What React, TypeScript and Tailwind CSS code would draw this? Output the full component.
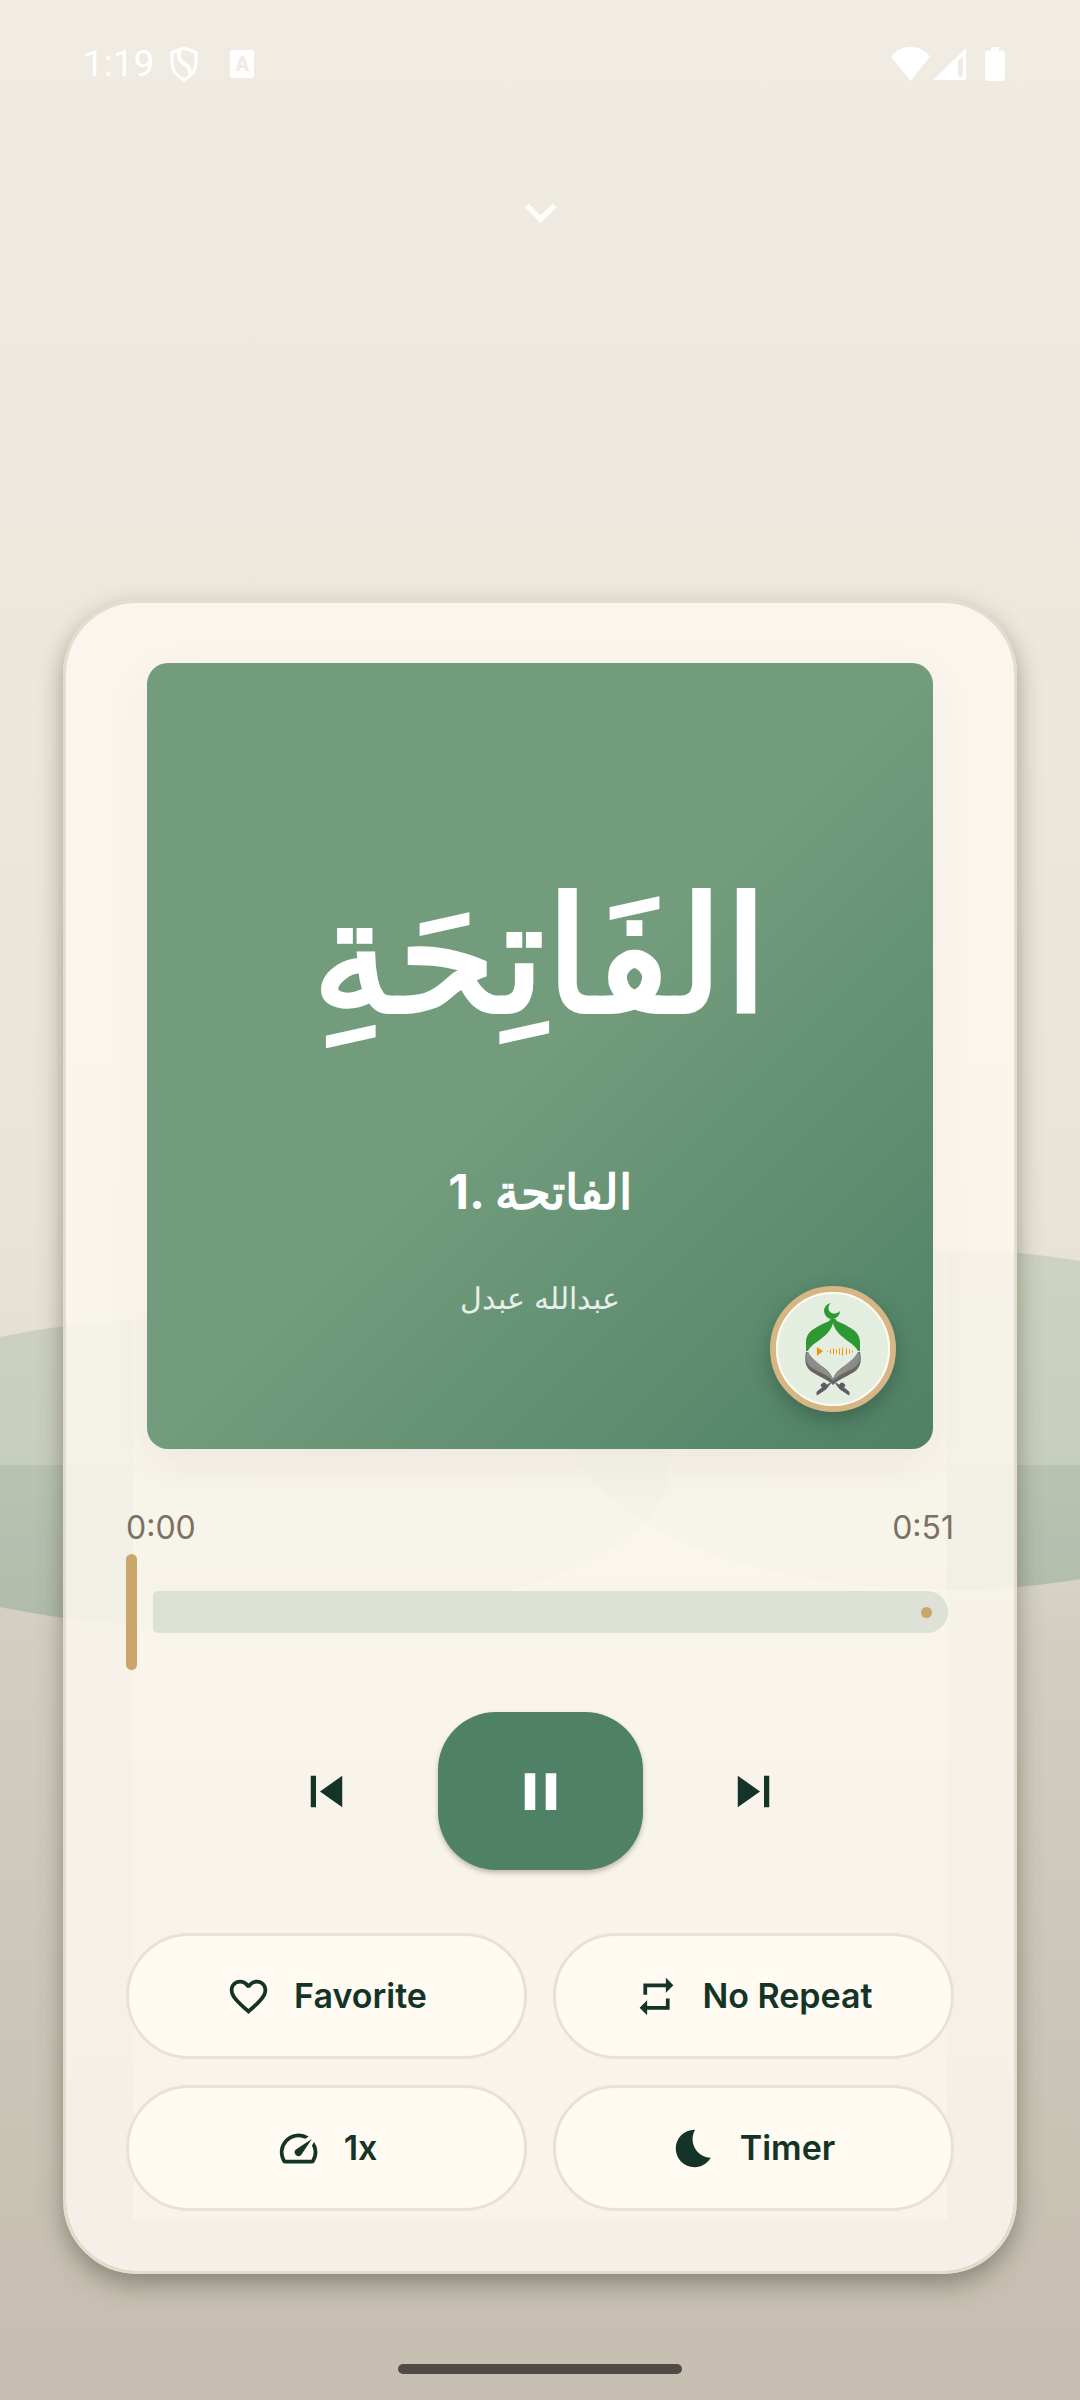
import { useState } from 'react';
import {
  MdBedtime,
  MdFavoriteBorder,
  MdKeyboardArrowDown,
  MdPause,
  MdPlayArrow,
  MdRepeat,
  MdSkipNext,
  MdSkipPrevious,
  MdSpeed,
} from 'react-icons/md';
import type { IconType } from 'react-icons';

const Landscape = () => (
  <svg
    className="absolute inset-0 w-full h-full"
    viewBox="0 0 1080 2400"
    preserveAspectRatio="none"
    aria-hidden="true"
  >
    <defs>
      <linearGradient id="sky" x1="0" y1="0" x2="0" y2="2400" gradientUnits="userSpaceOnUse">
        <stop offset="0" stopColor="#f0ece4" />
        <stop offset="0.25" stopColor="#ece8dc" />
        <stop offset="0.5" stopColor="#eae4d8" />
        <stop offset="0.61" stopColor="#e1ddcf" />
        <stop offset="0.68" stopColor="#d3cec2" />
        <stop offset="0.85" stopColor="#cac5b6" />
        <stop offset="1" stopColor="#c6beb0" />
      </linearGradient>
    </defs>
    <rect width="1080" height="2400" fill="url(#sky)" />
    <ellipse cx="223" cy="1472" rx="446" ry="156" fill="#8fac94" fillOpacity="0.3" />
    <ellipse cx="946" cy="1420" rx="378" ry="170" fill="#8fac94" fillOpacity="0.3" />
    {/* shaded half of the hills, under the horizon */}
    <clipPath id="ground">
      <rect y="1465" width="1080" height="935" />
    </clipPath>
    <g clipPath="url(#ground)" fill="#7f9a86" fillOpacity="0.2">
      <ellipse cx="223" cy="1472" rx="446" ry="156" />
      <ellipse cx="946" cy="1420" rx="378" ry="170" />
    </g>
  </svg>
);

const StatusBar = () => (
  <header className="relative flex items-center justify-between pl-[83px] pr-[75px] pt-[42px] text-white">
    <div className="flex items-center">
      <span className="font-[Roboto,sans-serif] text-[37px] leading-[44px]">1:19</span>
      <svg className="ml-4 w-7 h-9" viewBox="0 0 28 36" fill="none" stroke="currentColor" strokeWidth="3">
        <path d="M14 2L26 6.500V17C26 25 21 30 14 34C7 30 2 25 2 17V6.500Z" strokeLinejoin="round" />
        <path d="M9 5V10C9 18 21 18 20 28" strokeWidth="4" />
      </svg>
      <span className="ml-8 w-6 h-7 rounded-[3px] bg-white flex items-center justify-center font-[Roboto,sans-serif] text-[20px] leading-[20px] font-black text-[#efebe3]">
        A
      </span>
    </div>
    <div className="flex items-center">
      <svg className="w-[39px] h-[34px]" viewBox="0 0 39 34" fill="currentColor">
        <path d="M19.500 34L0 9.500C5.500 3 12 0 19.500 0S33.500 3 39 9.500Z" />
      </svg>
      <svg className="ml-[3px] w-[33px] h-[34px]" viewBox="0 0 33 34" fill="currentColor">
        <path fillRule="evenodd" d="M33 1V33H0ZM30 9L25 14V27C25 31 30 31 30 27Z" />
      </svg>
      <svg className="ml-[19px] w-5 h-[34px]" viewBox="0 0 20 34" fill="currentColor">
        <path d="M6 0H14V3.500H17A3 3 0 0 1 20 6.500V31A3 3 0 0 1 17 34H3A3 3 0 0 1 0 31V6.500A3 3 0 0 1 3 3.500H6Z" />
      </svg>
    </div>
  </header>
);

const bars = [
  [57, 1], [60, 4], [63, 6], [66, 4], [69, 6], [72, 8], [76, 6], [79, 4], [82, 2],
];

const AppBadge = () => (
  <div className="absolute right-[37px] bottom-[37px] w-[126px] h-[126px] rounded-full border-[6px] border-[#d6b685] bg-[#e4eee0] shadow-[0_8px_20px_rgba(30,60,45,0.4)]">
    <svg className="w-full h-full" viewBox="6 6 114 114">
      <defs>
        <linearGradient id="page" x1="0" y1="1" x2="1" y2="0">
          <stop offset="0.3" stopColor="#858585" />
          <stop offset="0.75" stopColor="#9a9c9a" />
          <stop offset="1" stopColor="#d0d6ce" />
        </linearGradient>
      </defs>
      <circle cx="63" cy="63" r="56" fill="none" stroke="#fffaf2" strokeWidth="2" />
      <path d="M61 17A8 8 0 1 0 70 25A7 7 0 0 1 60 26A6 6 0 0 1 61 17Z" fill="#2e9933" />
      <path d="M59 34L63 32L67 34L63 36Z" fill="#2e9933" />
      {['', 'matrix(-1 0 0 1 126 0)'].map((flip) => (
        <g key={flip} transform={flip || undefined}>
          <path d="M63 33C52 39 36 43 36 56V65H38C42 56 60 51 63 37Z" fill="#2e9933" />
          <path d="M36 66C34 76 36 82 42 86C50 91 58 94 63 99V93C60 82 44 78 38 66Z" fill="#66665e" />
          <path d="M37 66C35 74 36 78 42 82C50 87 59 89 63 95C62 84 44 78 38 66Z" fill="url(#page)" />
          <path d="M60 98L56 103L47 109V106L53 101C50 101 51 97 54 97C56 97 57 99 56 100L60 97Z" fill="#5c5c62" stroke="#5c5c62" />
        </g>
      ))}
      <path d="M47 61L53 65L47 70Z" fill="#fb9008" />
      {bars.map(([x, h]) => (
        <rect key={x} x={x} y={65.5 - h / 2} width="1" height={h} fill="#fb9008" />
      ))}
    </svg>
  </div>
);

const Chip = ({ icon: Icon, label }: { icon: IconType; label: string }) => (
  <button className="flex items-center justify-center gap-[23px] h-[126px] rounded-full border-[3px] border-[#eae1d4] bg-[#fffaf2] text-[34px] leading-[42px] font-semibold">
    <Icon size={45} />
    <span>{label}</span>
  </button>
);

export default function App() {
  const [playing, setPlaying] = useState(true);
  const [position, setPosition] = useState(0);

  return (
    <div className="relative flex flex-col min-h-screen overflow-hidden font-[Inter,sans-serif] text-[#143427]">
      <Landscape />
      <StatusBar />

      <button aria-label="Collapse player" className="relative self-center mt-[95px] text-white/90">
        <MdKeyboardArrowDown size={63} />
      </button>

      {/* Player card */}
      <main className="relative mt-auto mx-[63px] p-[60px] rounded-[74px] border-[3px] border-[#e5dccd] bg-[#fdf8f0]/85 bg-clip-padding shadow-[0_10px_24px_rgba(60,60,45,0.45)]">
        <div className="absolute inset-x-[67px] top-[76px] bottom-[52px] bg-[#fffaef]/40" />

        <div className="relative">
          {/* Cover */}
          <section className="relative mx-[21px] aspect-square rounded-[21px] bg-[linear-gradient(135deg,#729c7c_50%,#4f8166)] shadow-[0_16px_44px_rgba(80,70,90,0.07)] flex flex-col items-center text-white">
            <div
              lang="ar"
              dir="rtl"
              className="mt-[164px] text-[160px] leading-[260px] font-['DejaVu_Sans',sans-serif] [-webkit-text-stroke:4px_white]"
            >
              الفَاتِحَةِ
            </div>
            <h1 className="mt-[68px] text-[48px] leading-[74px] font-bold">
              1. <span lang="ar">الفاتحة</span>
            </h1>
            <p lang="ar" className="mt-[48px] text-[30px] leading-[42px] text-white/85">عبدالله عبدل</p>
            <AppBadge />
          </section>

          {/* Progress */}
          <div className="mt-[58px] flex justify-between text-[32px] leading-[42px] text-[#7c7062]">
            <span>0:00</span>
            <span>0:51</span>
          </div>
          <div className="mt-[5px] grid items-center">
            <div className="col-start-1 row-start-1 ml-[27px] mr-[6px] h-[42px] flex items-center justify-end pr-4 rounded-l-[5px] rounded-r-[21px] bg-[#4f8166]/16">
              <span className="w-[11px] h-[11px] rounded-full bg-[#caa66a]" />
            </div>
            <input
              type="range"
              min={0}
              max={51}
              value={position}
              onChange={(e) => setPosition(Number(e.target.value))}
              aria-label="Position"
              className="relative col-start-1 row-start-1 w-full h-[116px] appearance-none bg-transparent [&::-webkit-slider-thumb]:appearance-none [&::-webkit-slider-thumb]:w-[11px] [&::-webkit-slider-thumb]:h-[116px] [&::-webkit-slider-thumb]:rounded-full [&::-webkit-slider-thumb]:bg-[#caa66a]"
            />
          </div>

          {/* Transport */}
          <div className="mt-[42px] flex items-center justify-center gap-12">
            <button aria-label="Previous" className="w-[126px] h-[126px] flex items-center justify-center">
              <MdSkipPrevious size={63} />
            </button>
            <button
              aria-label={playing ? 'Pause' : 'Play'}
              onClick={() => setPlaying(!playing)}
              className="w-[205px] h-[158px] rounded-[58px] flex items-center justify-center bg-[#4f8166] text-white shadow-[0_3px_5px_rgba(60,50,50,0.3)]"
            >
              {playing ? <MdPause size={63} /> : <MdPlayArrow size={63} />}
            </button>
            <button aria-label="Next" className="w-[126px] h-[126px] flex items-center justify-center">
              <MdSkipNext size={63} />
            </button>
          </div>

          {/* Options */}
          <div className="mt-[63px] grid grid-cols-2 gap-[26px]">
            <Chip icon={MdFavoriteBorder} label="Favorite" />
            <Chip icon={MdRepeat} label="No Repeat" />
            <Chip icon={MdSpeed} label="1x" />
            <Chip icon={MdBedtime} label="Timer" />
          </div>
        </div>
      </main>

      <footer className="relative h-[126px] flex items-end justify-center pb-[26px]">
        <span className="w-[284px] h-[10px] rounded-full bg-[#4f4b44]" />
      </footer>
    </div>
  );
}
